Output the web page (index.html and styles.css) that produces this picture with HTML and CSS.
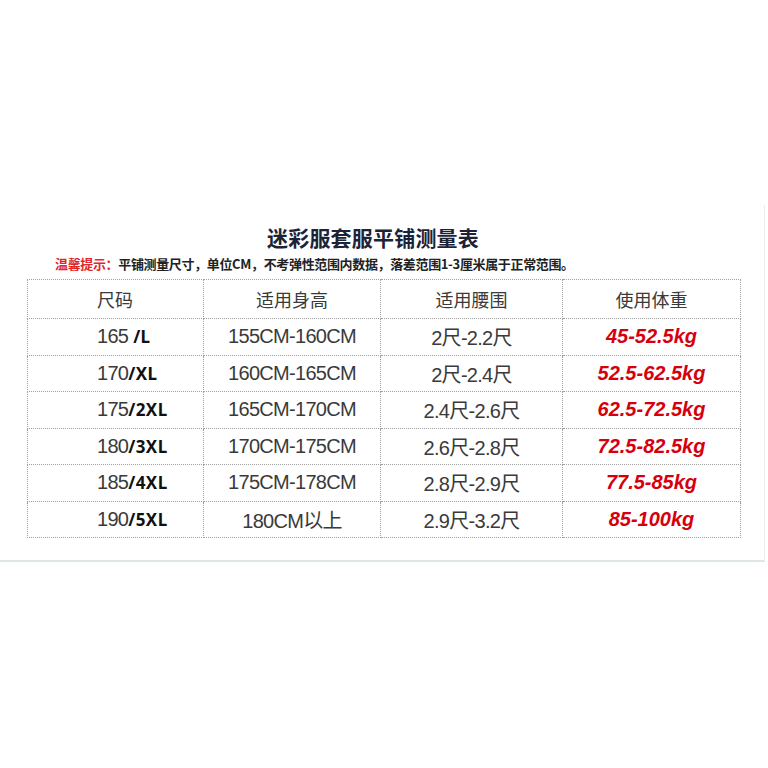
FILE: index.html
```html
<!DOCTYPE html>
<html lang="zh">
<head>
<meta charset="utf-8">
<title>迷彩服套服平铺测量表</title>
<link rel="stylesheet" href="styles.css">
</head>
<body>
<div class="panel">
  <h1 class="title">迷彩服套服平铺测量表</h1>
  <p class="notice"><span class="notice-label">温馨提示：</span>平铺测量尺寸，单位CM，不考弹性范围内数据，落差范围1-3厘米属于正常范围。</p>
  <table class="size-table">
    <colgroup>
      <col class="c1"><col class="c2"><col class="c3"><col class="c4">
    </colgroup>
    <thead>
      <tr class="head-row">
        <th class="size">尺码</th>
        <th>适用身高</th>
        <th>适用腰围</th>
        <th>使用体重</th>
      </tr>
    </thead>
    <tbody>
      <tr>
        <td class="size">165 <span class="tag">/L</span></td>
        <td>155CM-160CM</td>
        <td>2尺-2.2尺</td>
        <td class="weight">45-52.5kg</td>
      </tr>
      <tr>
        <td class="size">170<span class="tag">/XL</span></td>
        <td>160CM-165CM</td>
        <td>2尺-2.4尺</td>
        <td class="weight">52.5-62.5kg</td>
      </tr>
      <tr>
        <td class="size">175<span class="tag">/2XL</span></td>
        <td>165CM-170CM</td>
        <td>2.4尺-2.6尺</td>
        <td class="weight">62.5-72.5kg</td>
      </tr>
      <tr>
        <td class="size">180<span class="tag">/3XL</span></td>
        <td>170CM-175CM</td>
        <td>2.6尺-2.8尺</td>
        <td class="weight">72.5-82.5kg</td>
      </tr>
      <tr>
        <td class="size">185<span class="tag">/4XL</span></td>
        <td>175CM-178CM</td>
        <td>2.8尺-2.9尺</td>
        <td class="weight">77.5-85kg</td>
      </tr>
      <tr>
        <td class="size">190<span class="tag">/5XL</span></td>
        <td>180CM以上</td>
        <td>2.9尺-3.2尺</td>
        <td class="weight">85-100kg</td>
      </tr>
    </tbody>
  </table>
</div>
</body>
</html>
```

FILE: styles.css
```css
html, body {
  margin: 0;
  padding: 0;
  background: #ffffff;
}

body {
  width: 768px;
  height: 768px;
  overflow: hidden;
  font-family: "Liberation Sans", "Noto Sans CJK SC", sans-serif;
}

.panel {
  margin-top: 205px;
  width: 765px;
  height: 357px;
  box-sizing: border-box;
  padding-top: 20px;
  border-right: 1px solid #e9eced;
  border-bottom: 2px solid #dfe6e8;
}

.title {
  margin: 0;
  padding-right: 18px;
  text-align: center;
  font-family: "Noto Sans CJK SC", sans-serif;
  font-size: 21px;
  line-height: 24px;
  font-weight: 700;
  color: #1d2337;
  letter-spacing: 0.2px;
}

.notice {
  margin: 8px 0 0 55px;
  font-family: "Noto Sans CJK SC", sans-serif;
  font-size: 13px;
  line-height: 14px;
  font-weight: 700;
  color: #222222;
  letter-spacing: -0.35px;
  white-space: nowrap;
}

.notice-label {
  color: #e3262a;
}

.size-table {
  margin: 8px 0 0 27px;
  width: 713px;
  border-collapse: collapse;
  table-layout: fixed;
  border: 1px dotted #a0a0a0;
}

.c1 { width: 176px; }
.c2 { width: 177px; }
.c3 { width: 182px; }
.c4 { width: 178px; }

.size-table th,
.size-table td {
  border: 1px dotted #a0a0a0;
  padding: 0;
  text-align: center;
  vertical-align: middle;
  color: #3a3a3a;
  white-space: nowrap;
}

.size-table th {
  height: 38px;
  font-family: "Noto Sans CJK SC", sans-serif;
  font-size: 18px;
  font-weight: 400;
}

.size-table td {
  height: 35.5px;
  font-size: 20px;
  letter-spacing: -0.7px;
}

.size-table .size {
  text-align: left;
  padding-left: 69px;
}

.tag {
  font-family: "Noto Sans", sans-serif;
  font-weight: 700;
  font-size: 17px;
  letter-spacing: 0.4px;
  color: #111111;
}

.size-table .weight {
  font-family: "Liberation Sans", sans-serif;
  font-style: italic;
  font-weight: 700;
  font-size: 20px;
  letter-spacing: 0;
  color: #d6000d;
}
```
